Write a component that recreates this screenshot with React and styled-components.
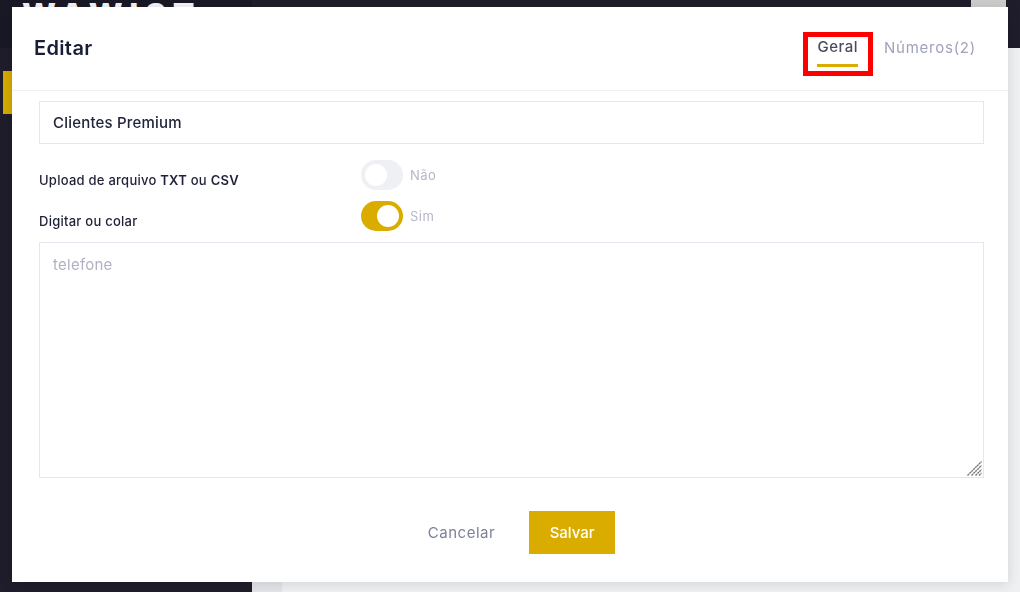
import React from "react";
import styled, { createGlobalStyle } from "styled-components";

const GlobalStyle = createGlobalStyle`
  html, body { margin: 0; padding: 0; height: 100%; overflow: hidden; }
  body { font-family: "Inter", "Liberation Sans", sans-serif; }
  * { box-sizing: border-box; }
`;

export default function App() {
  return (
    <>
      <GlobalStyle />
      <Page>
        <Sidebar>
          <SideHead>
            <Logo>WAWIST</Logo>
          </SideHead>
          <ActiveItem />
        </Sidebar>
        <Main>
          <TopBar>
            <Avatar />
          </TopBar>
          <Content>
            <ContentCard />
          </Content>
        </Main>
      </Page>

      <Modal>
        <ModalHead>
          <Title>Editar</Title>
          <Tabs>
            <Tab active>
              Geral
              <Highlight />
            </Tab>
            <Tab>Números(2)</Tab>
          </Tabs>
        </ModalHead>
        <ModalBody>
          <NameInput defaultValue="Clientes Premium" />
          <SwitchRow>
            <SwitchLabel>
              Upload de arquivo <b>TXT</b> ou <b>CSV</b>
            </SwitchLabel>
            <Toggle />
            <ToggleText>Não</ToggleText>
          </SwitchRow>
          <SwitchRow>
            <SwitchLabel>Digitar ou colar</SwitchLabel>
            <Toggle on />
            <ToggleText>Sim</ToggleText>
          </SwitchRow>
          <AreaWrap>
            <PhoneArea placeholder="telefone" />
            <Grip viewBox="0 0 15 15">
              <path d="M0.5 14.5 L14.5 0.5 M4.5 14.5 L14.5 4.5 M8.5 14.5 L14.5 8.5 M12 14.5 L14.5 12" />
            </Grip>
          </AreaWrap>
          <Footer>
            <CancelButton>Cancelar</CancelButton>
            <SaveButton>Salvar</SaveButton>
          </Footer>
        </ModalBody>
      </Modal>
    </>
  );
}

const Page = styled.div`
  display: flex;
  width: 1020px;
  height: 592px;
  background: #eff0f2;
`;

const Sidebar = styled.div`
  width: 252px;
  background: #1f1d2b;
  display: flex;
  flex-direction: column;
`;

const SideHead = styled.div`
  height: 48px;
  background: #191825;
  padding-left: 22px;
`;

const Logo = styled.div`
  color: #f4f4f6;
  font-size: 32px;
  font-weight: 800;
  line-height: 32px;
  letter-spacing: 6.6px;
  white-space: nowrap;
`;

const ActiveItem = styled.div`
  width: 40px;
  height: 43px;
  margin: 23px 0 0 3px;
  background: #d4a900;
`;

const Main = styled.div`
  flex: 1;
  display: flex;
  flex-direction: column;
`;

const TopBar = styled.div`
  height: 48px;
  background: #1f1d2b;
  display: flex;
  justify-content: flex-end;
  padding-right: 14px;
`;

const Avatar = styled.div`
  width: 35px;
  height: 7px;
  background: #cccccc;
`;

const Content = styled.div`
  flex: 1;
  padding: 0 0 0 30px;
  background: #e3e4e9;
`;

const ContentCard = styled.div`
  height: 100%;
  background: #eff0f2;
`;

const Modal = styled.div`
  position: fixed;
  top: 7px;
  left: 12px;
  width: 996px;
  height: 575px;
  background: #fff;
  box-shadow: 0 2px 12px rgba(0, 0, 0, 0.12);
  display: flex;
  flex-direction: column;
`;

const ModalHead = styled.div`
  height: 84px;
  padding: 0 32px 0 22px;
  border-bottom: 1px solid #eff0f6;
  display: flex;
  justify-content: space-between;
`;

const Title = styled.h2`
  margin: 29px 0 0;
  font-size: 20px;
  line-height: 24px;
  font-weight: 600;
  letter-spacing: 0.35px;
  color: #1a1d37;
`;

const Tabs = styled.div`
  display: flex;
  gap: 26px;
  padding-top: 30px;
`;

const Tab = styled.div`
  position: relative;
  height: 30px;
  font-size: 15px;
  line-height: ${(props) => (props.active ? "20px" : "22px")};
  letter-spacing: ${(props) => (props.active ? "0.5px" : "0.75px")};
  font-weight: ${(props) => (props.active ? 500 : 400)};
  color: ${(props) => (props.active ? "#4a4b60" : "#a0a2ba")};
  border-bottom: ${(props) => (props.active ? "3px solid #dbac00" : "none")};
`;

/* the red marker drawn over the active tab in the screenshot */
const Highlight = styled.span`
  position: absolute;
  top: -5px;
  left: -14px;
  right: -15px;
  bottom: -12px;
  border: 5px solid #ff0000;
`;

const ModalBody = styled.div`
  padding: 10px 24px 0 27px;
  display: flex;
  flex-direction: column;
`;

const NameInput = styled.input`
  height: 43px;
  padding: 0 13px;
  border: 1px solid #e4e6f0;
  outline: none;
  font: 500 15px "Inter", sans-serif;
  letter-spacing: 0.2px;
  color: #22243c;
`;

const SwitchRow = styled.div`
  display: flex;
  align-items: flex-start;
  height: 41px;
  padding-top: 16px;
`;

const SwitchLabel = styled.label`
  width: 322px;
  padding-top: 12px;
  font-size: 13px;
  line-height: 16px;
  font-weight: 500;
  letter-spacing: 0.25px;
  color: #1f2138;
  b { font-weight: 600; }
`;

const Toggle = styled.div`
  width: 42px;
  height: 30px;
  border-radius: 15px;
  background: ${(props) => (props.on ? "#dbac00" : "#eef0f4")};
  position: relative;
  &::after {
    content: "";
    position: absolute;
    top: 4px;
    left: ${(props) => (props.on ? "16px" : "4px")};
    width: 22px;
    height: 22px;
    border-radius: 50%;
    background: #fff;
  }
`;

const ToggleText = styled.span`
  margin-left: 7px;
  font-size: 13px;
  line-height: 30px;
  letter-spacing: 0.5px;
  color: #b5b7c8;
`;

const AreaWrap = styled.div`
  position: relative;
  margin-top: 16px;
  height: 236px;
`;

const PhoneArea = styled.textarea`
  display: block;
  width: 100%;
  height: 100%;
  padding: 12px 13px;
  border: 1px solid #e4e6f0;
  outline: none;
  resize: none;
  font: 400 15px "Inter", sans-serif;
  letter-spacing: 0.25px;
  &::placeholder { color: #b0b2c3; }
`;

const Grip = styled.svg`
  position: absolute;
  right: 2px;
  bottom: 2px;
  width: 15px;
  height: 15px;
  path {
    fill: none;
    stroke: #7a7a7a;
    stroke-width: 1.4;
    stroke-dasharray: 2.2 0.5;
  }
`;

const Footer = styled.div`
  display: flex;
  justify-content: center;
  align-items: center;
  gap: 34px;
  margin-top: 33px;
  padding-left: 20px;
`;

const CancelButton = styled.button`
  border: none;
  background: none;
  padding: 0;
  font: 400 15px "Inter", sans-serif;
  letter-spacing: 0.5px;
  color: #7e8099;
`;

const SaveButton = styled.button`
  width: 86px;
  height: 43px;
  border: none;
  background: #dbac00;
  color: #fff;
  font: 500 15px "Inter", sans-serif;
`;
